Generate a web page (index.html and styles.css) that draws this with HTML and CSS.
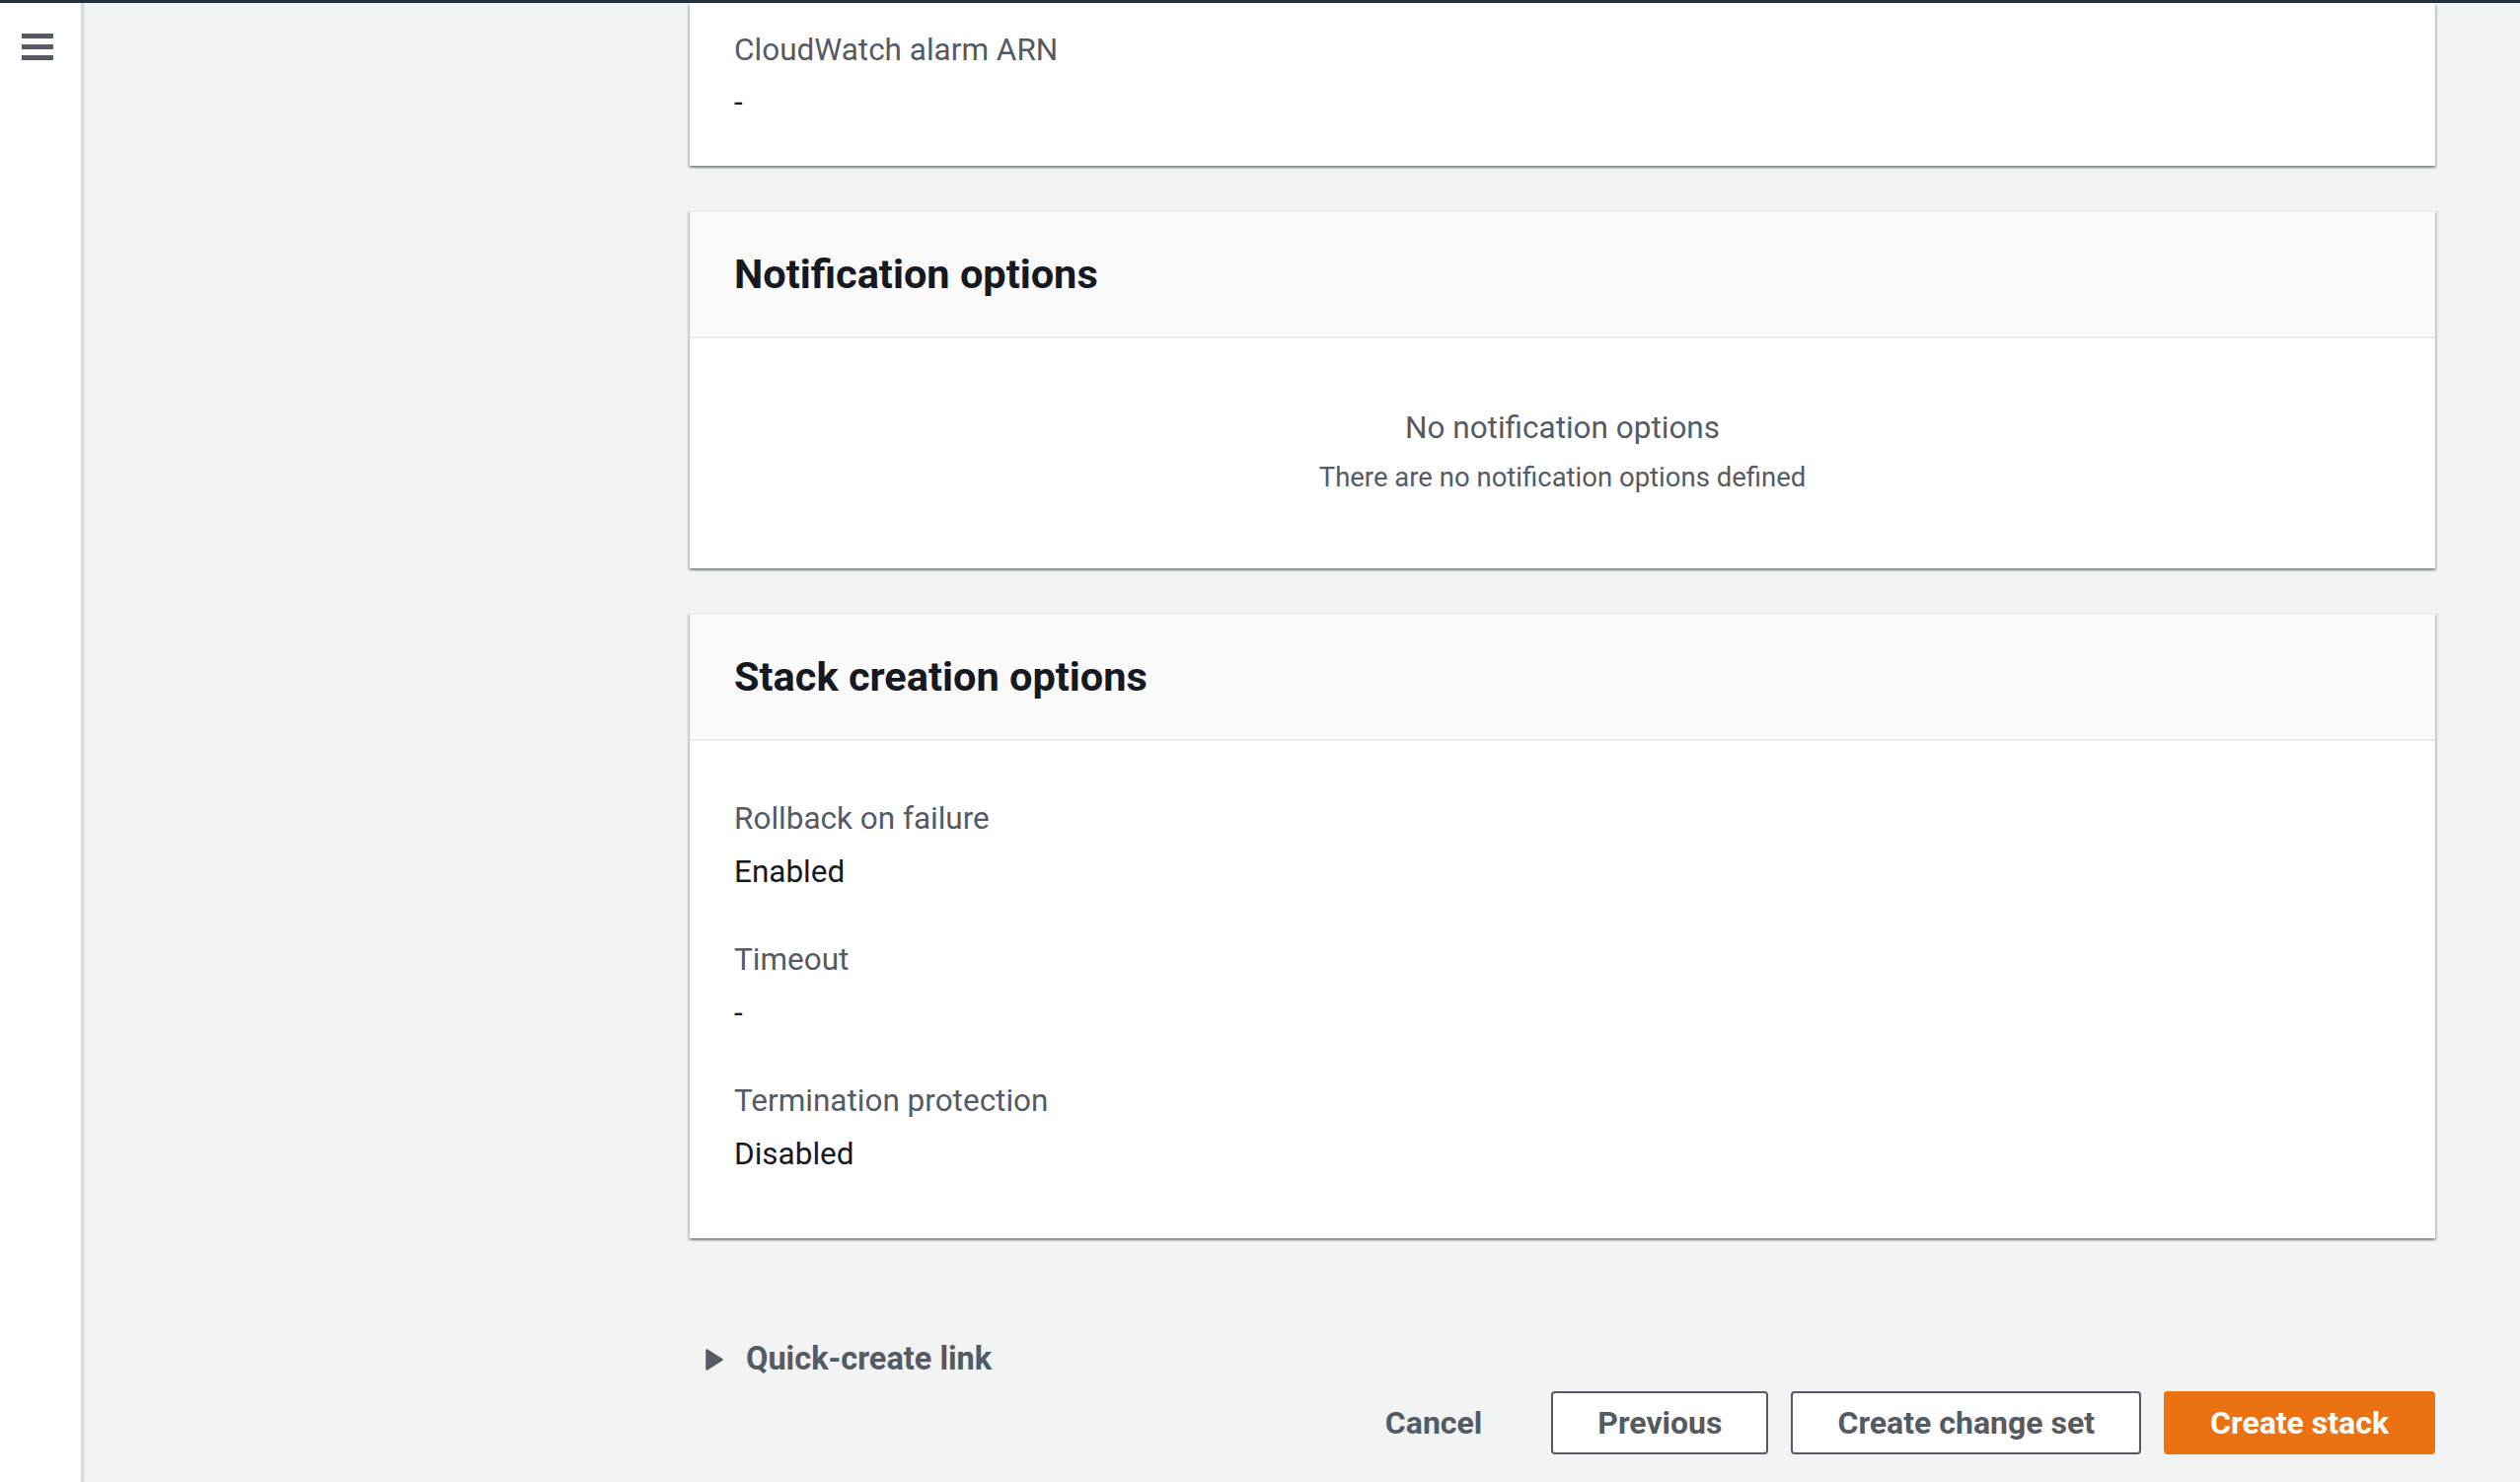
FILE: index.html
```html
<!DOCTYPE html>
<html lang="en">
<head>
<meta charset="utf-8">
<title>Review stack</title>
<link rel="stylesheet" href="styles.css">
</head>
<body>
<div class="topbar"></div>
<div class="layout">
  <aside class="sidenav">
    <button class="menu-toggle" aria-label="Open navigation">
      <span></span><span></span><span></span>
    </button>
  </aside>
  <main class="main">
    <section class="card card-cut">
      <div class="card-body cut-body">
        <div class="kv">
          <div class="kv-label">CloudWatch alarm ARN</div>
          <div class="kv-value">-</div>
        </div>
      </div>
    </section>

    <section class="card">
      <header class="card-header"><h2>Notification options</h2></header>
      <div class="card-body empty">
        <div class="empty-title">No notification options</div>
        <div class="empty-desc">There are no notification options defined</div>
      </div>
    </section>

    <section class="card">
      <header class="card-header"><h2>Stack creation options</h2></header>
      <div class="card-body kv-list">
        <div class="kv">
          <div class="kv-label">Rollback on failure</div>
          <div class="kv-value">Enabled</div>
        </div>
        <div class="kv">
          <div class="kv-label">Timeout</div>
          <div class="kv-value">-</div>
        </div>
        <div class="kv">
          <div class="kv-label">Termination protection</div>
          <div class="kv-value">Disabled</div>
        </div>
      </div>
    </section>

    <div class="expander">
      <svg class="caret" width="18" height="22" viewBox="0 0 18 22" aria-hidden="true">
        <path d="M1.5 1.5 L16.5 11 L1.5 20.5 Z" fill="#545b64" stroke="#545b64" stroke-width="2.5" stroke-linejoin="round"/>
      </svg>
      <span class="expander-label">Quick-create link</span>
    </div>

    <div class="actions">
      <button class="btn btn-link">Cancel</button>
      <button class="btn">Previous</button>
      <button class="btn">Create change set</button>
      <button class="btn btn-primary">Create stack</button>
    </div>
  </main>
</div>
</body>
</html>
```

FILE: styles.css
```css
* { box-sizing: border-box; }

html, body {
  margin: 0;
  padding: 0;
  height: 100%;
  overflow: hidden;
}

body {
  font-family: Roboto, "Liberation Sans", Arial, sans-serif;
  background: #f2f3f3;
  color: #16191f;
}

.topbar {
  height: 3px;
  background: #232f3e;
}

.layout {
  display: flex;
  height: calc(100% - 3px);
}

.sidenav {
  width: 84px;
  flex: none;
  background: #ffffff;
  border-right: 2px solid #d5dbdb;
  box-shadow: 1px 0 2px rgba(0, 28, 36, 0.15);
  padding: 31px 0 0 22px;
}

.menu-toggle {
  display: flex;
  flex-direction: column;
  gap: 6px;
  padding: 0;
  margin: 0;
  border: 0;
  background: transparent;
  cursor: pointer;
}

.menu-toggle span {
  display: block;
  width: 32px;
  height: 5px;
  background: #545b64;
}

.main {
  flex: 1;
  padding: 0 86px 0 615px;
  display: flex;
  flex-direction: column;
}

.card {
  background: #ffffff;
  border-top: 2px solid #eaeded;
  box-shadow: 0 2px 2px 0 rgba(0, 28, 36, 0.3),
              2px 2px 2px 0 rgba(0, 28, 36, 0.15),
              -2px 2px 2px 0 rgba(0, 28, 36, 0.15);
  margin-bottom: 45px;
}

.card-cut {
  border-top: 0;
}

.card-header {
  background: #fafafa;
  border-bottom: 2px solid #eaeded;
  padding: 38px 45px 38px;
}

.card-header h2 {
  margin: 0;
  font-size: 41.5px;
  line-height: 50px;
  font-weight: 700;
  color: #16191f;
}

.card-body {
  padding: 0 45px;
}

.cut-body {
  padding-top: 22.5px;
  padding-bottom: 39.5px;
}

.kv {
  display: flex;
  flex-direction: column;
  gap: 4px;
}

.kv-label {
  font-size: 31.5px;
  line-height: 49.5px;
  color: #545b64;
}

.kv-value {
  font-size: 31.5px;
  line-height: 49.5px;
  color: #16191f;
}

.kv-list {
  display: flex;
  flex-direction: column;
  gap: 40px;
  padding-top: 54px;
  padding-bottom: 61px;
}

.empty {
  text-align: center;
  padding-top: 65.5px;
  padding-bottom: 72px;
  color: #545b64;
}

.empty-title {
  font-size: 31.5px;
  line-height: 49.5px;
}

.empty-desc {
  font-size: 27.5px;
  line-height: 40px;
  margin-top: 6px;
}

.expander {
  display: flex;
  align-items: center;
  gap: 23px;
  margin-top: 53px;
  padding-left: 16px;
  height: 49.5px;
}

.caret {
  display: block;
}

.expander-label {
  font-size: 32.5px;
  line-height: 49.5px;
  font-weight: 700;
  color: #545b64;
}

.actions {
  display: flex;
  justify-content: flex-end;
  gap: 23px;
  margin-top: 7.5px;
}

.btn {
  font-family: Roboto, "Liberation Sans", Arial, sans-serif;
  font-size: 32px;
  font-weight: 700;
  line-height: 60px;
  padding: 0 45px;
  border: 2px solid #545b64;
  border-radius: 4px;
  background: #ffffff;
  color: #545b64;
  cursor: pointer;
}

.btn-link {
  border-color: transparent;
  background: transparent;
}

.btn-primary {
  background: #ec7211;
  border-color: #ec7211;
  color: #ffffff;
}
```
